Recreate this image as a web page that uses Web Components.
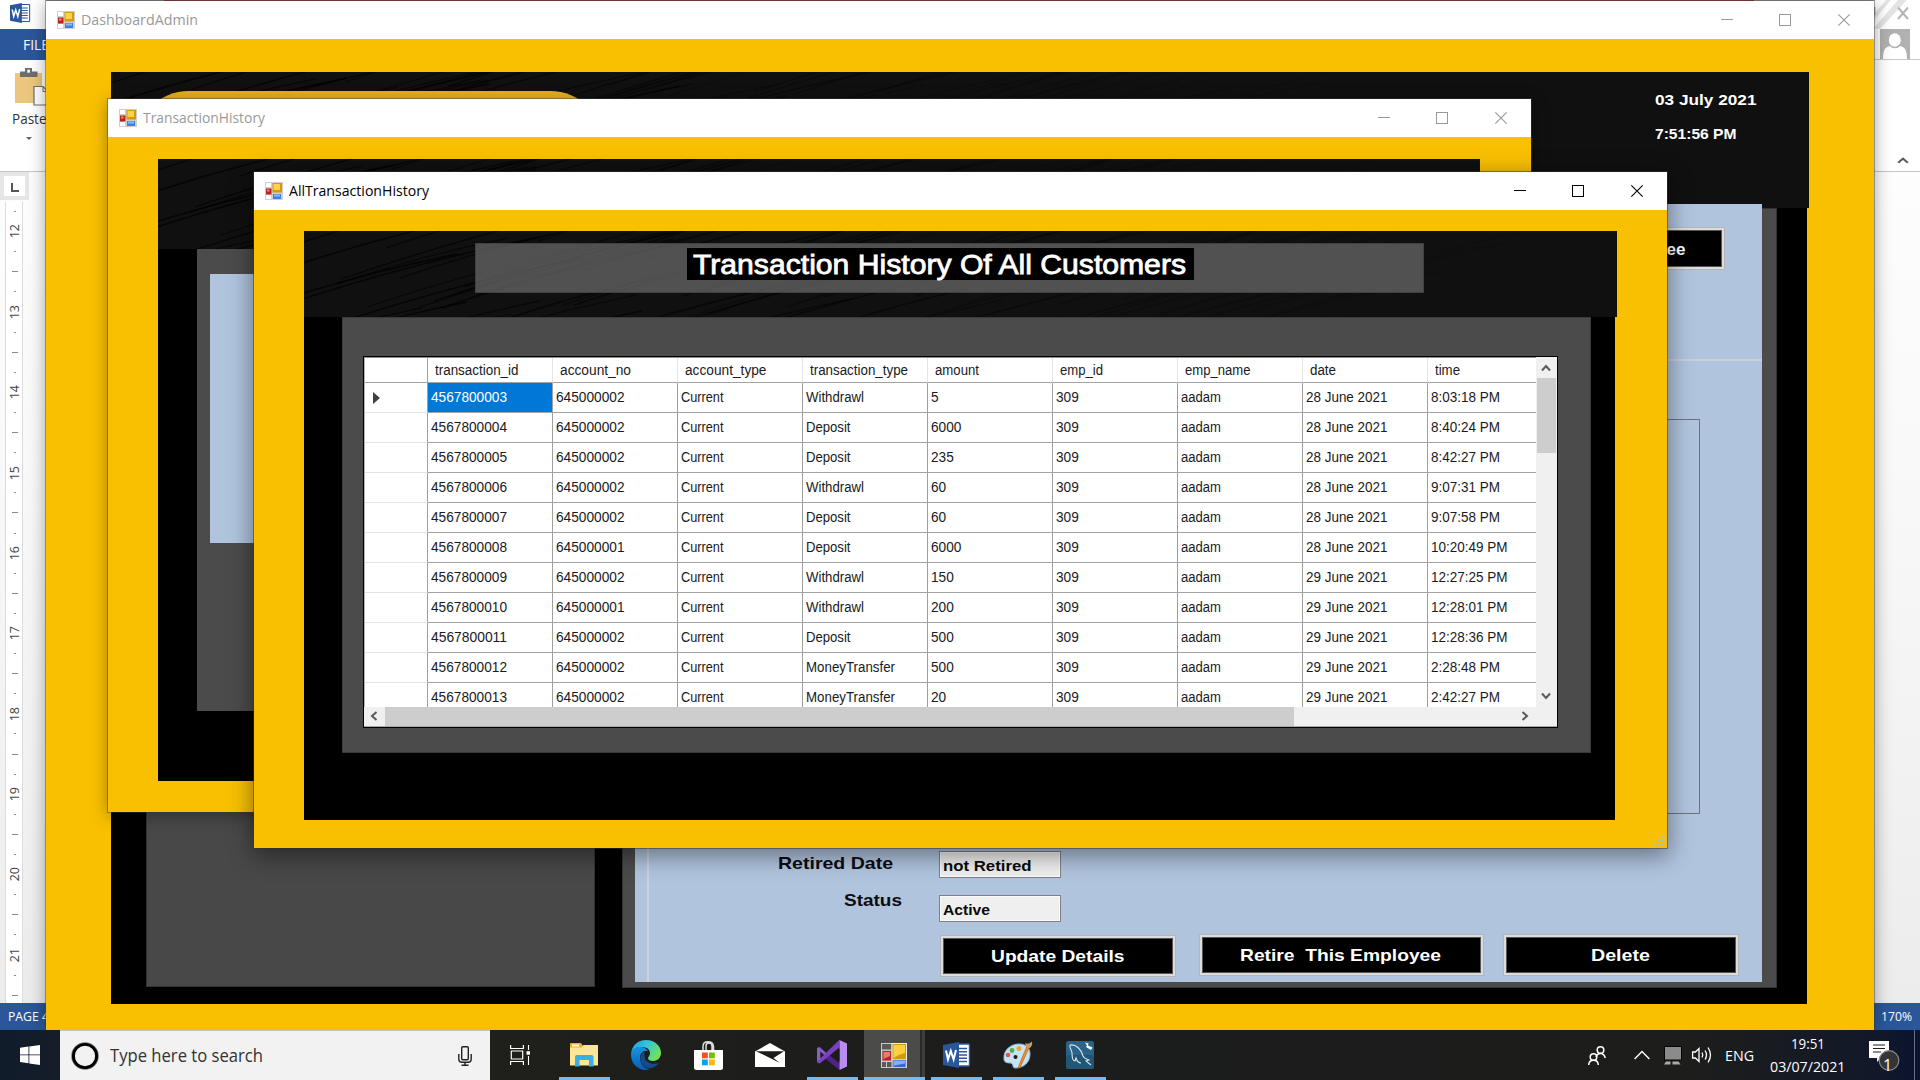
<!DOCTYPE html>
<html lang="en">
<head>
<meta charset="utf-8">
<title>AllTransactionHistory</title>
<style>
html,body{margin:0;height:100%;overflow:hidden}
body{font-family:"Open Sans","Noto Sans",sans-serif;width:1920px;height:1080px;position:relative;background:#fff}
</style>
</head>
<body>
<desk-top></desk-top>

<script>
const define = (name, css, html, after) => {
  customElements.define(name, class extends HTMLElement {
    connectedCallback() {
      if (this.shadowRoot) return;
      const root = this.attachShadow({ mode: 'open' });
      const t = document.createElement('template');
      t.innerHTML = `<style>*{box-sizing:border-box}${css}</style>` + (typeof html === 'function' ? html(this) : html);
      root.append(t.content.cloneNode(true));
      if (after) after(this, root);
    }
  });
};

/* Icons */
const formIcon = '<rect width="18" height="18" fill="#cfcfcf"/><path d="M1 1h5v4H1zM1 13h5v4H1z" fill="#fff"/><rect x="1" y="6.500" width="5.500" height="6" fill="#b8241c"/><rect x="2" y="7.500" width="2.500" height="2" fill="#e88"/><rect x="7.500" y="1" width="9.500" height="9.500" fill="#d79a08"/><rect x="8.500" y="2" width="6.500" height="6" fill="#fbd24a"/><rect x="8" y="12" width="8" height="5" fill="#3f7fe8"/><rect x="9" y="12.500" width="6" height="2" fill="#8db8ff"/>';
const taskForm = '<rect x=".5" y=".5" width="25" height="24" fill="#5a5a58" stroke="#c9c9c9"/><path d="M.5 7h11M.5 18.500h11M5.500 18.500V25M11 0v25" stroke="#c9c9c9"/><rect x="11" y=".5" width="14.500" height="16" fill="#d69a06" stroke="#eee"/><path d="M12.500 2H24v8q-6 1-11.500 5z" fill="#fbcf3f"/><rect x="1" y="7.500" width="9.500" height="10.500" fill="#b9242a" stroke="#ddd" stroke-width=".7"/><path d="M2.500 9H9v4l-6.500 3z" fill="#ea7a7a"/><rect x="12" y="16.500" width="13" height="8" fill="#3566d8" stroke="#ddd" stroke-width=".7"/><path d="M13 17.500h11v3l-11 2z" fill="#86aefb"/>';
const wordIcon = '<path d="M12 2h13.500q1 0 1 1v20q0 1-1 1H12z" fill="#fff" stroke="#2b579a" stroke-width="1.400"/><path d="M14 6.500h10M14 9.700h10M14 13h10M14 16.300h10M14 19.500h10" stroke="#2b579a" stroke-width="1.400"/><path d="M0 3l16-3v26L0 23z" fill="#2b579a"/><path d="M3 8.500l2 9 2.800-8.500 2.800 8.500 2.400-9.500" fill="none" stroke="#fff" stroke-width="2"/>';
const icons = {
  form: ['0 0 18 18', formIcon],
  taskform: ['0 0 26 25', taskForm],
  word: ['0 0 27 26', wordIcon],
  start: ['0 0 20 20', '<path d="M0 2.800L8.500 1.600v7.900H0zM9.300 1.500L20 0v9.500H9.300zM0 10.300h8.500v8L0 17.100zM9.300 10.300H20V20L9.300 18.500z" fill="#fff"/>'],
  cortana: ['0 0 28 28', '<circle cx="14" cy="14" r="12" fill="#fff" stroke="#777" stroke-width="3.600"/><circle cx="14" cy="14" r="11.600" fill="#f2f2f2" stroke="#000" stroke-width="2.900"/>'],
  mic: ['0 0 14 20', '<rect x="3.700" y=".7" width="6.600" height="13" rx="1" fill="none" stroke="#222" stroke-width="1.400"/><path d="M.8 8v5q0 3.200 3.200 3.200h6q3.200 0 3.200-3.200V8M7 16v3M3.500 19.200h7" fill="none" stroke="#222" stroke-width="1.400"/>'],
  taskview: ['0 0 20 20', '<path d="M.6 0v3.500h12.800V0M.6 20v-3.500h12.800V20M1.300 6h11.400v8H1.300z" fill="none" stroke="#fff" stroke-width="1.200"/><path d="M18.500 0v5M18.500 11v9" stroke="#fff" stroke-width="1.100"/><rect x="16.500" y="6.200" width="3.500" height="3.500" fill="#fff"/>'],
  explorer: ['0 0 28 24', '<path d="M0 1q0-1 1-1h10l2 3h14v19H0z" fill="#e8b21c"/><path d="M2 1.500h7v2H2z" fill="#fff"/><path d="M0 4.500h11.500l2-2.500H28v20.500H0z" fill="#ffe594"/><path d="M5 23.500V14q0-2 2-2h14.500q2 0 2 2v9.500h-4.500V17H9.500v6.500z" fill="#35b1e6"/>'],
  edge: ['0 0 30 30', '<defs><linearGradient id="a" x1="0" y1="0" x2="1" y2=".5"><stop offset="0" stop-color="#1b9de0"/><stop offset=".5" stop-color="#35c3d6"/><stop offset="1" stop-color="#6de35c"/></linearGradient><linearGradient id="b" x1="0" y1="0" x2="0" y2="1"><stop offset="0" stop-color="#1595e0"/><stop offset="1" stop-color="#0b5cb4"/></linearGradient></defs><path d="M0 14C1 5 7 0 15 0c9 0 15 6 15 13 0 5-4 8-8 8-3 0-5-1-5-3 0-1 2-2 2-5 0-4-4-6-8-6C5 7 1 10 0 14z" fill="url(#a)"/><path d="M0 15c0-6 6-9 11-8 3 1 5 2 6 4-5-1-8 3-8 7 0 6 5 11 10 11.500C8 32 0 24 0 15z" fill="url(#b)"/><path d="M13 12c-5 3-5 10 0 14 5 4 11 2 15-3-6 2-12 0-14-4-1-3 0-5-1-7z" fill="#104d8c"/>'],
  store: ['0 0 29 29', '<path d="M9 10V5.500q0-4.700 5-4.700t5.500 4.700V10M12 10V5q0-3 3-3t3 3v4" fill="none" stroke="#ddd" stroke-width="1.500"/><path d="M0 9h29v17.500q0 2.500-2.500 2.500h-24Q0 29 0 26.500z" fill="#fff"/><path d="M8 11.500h5.800v5.800H8z" fill="#f25022"/><path d="M15 11.500h5.800v5.800H15z" fill="#7fba00"/><path d="M8 18.500h5.800v5.800H8z" fill="#00a4ef"/><path d="M15 18.500h5.800v5.800H15z" fill="#ffb900"/>'],
  mail: ['0 0 30 24', '<path d="M0 8.500L15 0l15 8.500V24H0z" fill="#fff"/><path d="M1 8.200h28L18.500 15l6.500 5-14-7z" fill="#1c1c1b"/>'],
  vs: ['0 0 30 30', '<path d="M0 8l2.500-1 20 16.500V30L0 12z" fill="#52218a"/><path d="M0 8v14l2.500 1.500L22.500 7V0L9 13 2.500 7z" fill="#865fc5"/><path d="M3.300 11.500v7l4-3.500z" fill="#1c1c1b"/><path d="M22.500 0L30 3.500v23L22.500 30z" fill="#b98cf0"/><path d="M0 22l2.500 1.500L22.500 7V0z" fill="#7b3fc4"/><path d="M22.500 9L15 15l7.500 6z" fill="#1c1c1b"/>'],
  paint: ['0 0 30 28', '<path d="M1 18C0 9 8 3 16 3c7 0 11 4 11 10 0 9-7 14-15 14-3 0-1-4-4-5-3 0-7 0-7-4z" fill="#c5e3f4" stroke="#8bbbd8"/><circle cx="5" cy="14" r="2.300" fill="#e8504a"/><circle cx="9" cy="9.500" r="2.400" fill="#4db04a"/><circle cx="16" cy="7.500" r="2.500" fill="#f3a52b"/><circle cx="12.500" cy="16" r="2" fill="#1c1c1b"/><path d="M24 5L15 27l2-.5L26 7z" fill="#ef8f25" stroke="#b5641a" stroke-width=".7"/><path d="M22 2q3 2 7-1.500Q30 5 26 7.500L23.500 6z" fill="#c89c6a"/>'],
  mysql: ['0 0 28 28', '<rect width="28" height="28" rx="2.500" fill="#2a6488"/><rect y="14" width="28" height="14" rx="2.500" fill="#215675"/><path d="M4 4c6-1 11 4 13 11 1 3 4 3 6 4l-3 1 5 4M4 4c-1 3 2 5 2 8 0 5 1 8 3 8l1-3c1 3 3 5 5 5" fill="none" stroke="#d9e7ef" stroke-width="1.100"/><path d="M19 1.500l2 3-1 1.500 5 3 1.500-2.500L22 4.500l.5-2z" fill="#fff"/>'],
  people: ['0 0 18 19', '<g fill="none" stroke="#fff" stroke-width="1.500"><circle cx="12.500" cy="4" r="3.300"/><path d="M8 11q1-3.500 4.500-3.500T17.300 12"/><circle cx="5.500" cy="11" r="3.300"/><path d="M.7 19q.3-4.700 4.800-4.700T10.300 19"/></g>'],
  up: ['0 0 16 10', '<path d="M.6 9L8 1.500 15.400 9" fill="none" stroke="#fff" stroke-width="1.400"/>'],
  net: ['0 0 18 19', '<rect x=".5" y=".5" width="17" height="13.500" fill="#8b8b8b" stroke="#050505"/><path d="M0 18.500l2-3h4.500v3zM8.500 18.500v-3h6l2 3z" fill="#aaa"/>'],
  sound: ['0 0 21 18', '<g fill="none" stroke="#fff" stroke-width="1.300"><path d="M.6 6h2.800L7 2.500v13L3.400 12H.6z"/><path d="M10 6.500q1.600 2.500 0 5M13 4.500q3 4.500 0 9M16 1.500q5 7.500 0 15"/></g>'],
  note: ['0 0 31 32', '<path d="M0 2h20v17H12l-4 4v-4H0z" fill="#fff"/><path d="M4 6h12M4 9.500h12M4 13h8" stroke="#1c1c1b" stroke-width="1.200"/><circle cx="20" cy="21.500" r="9.800" fill="#343536" stroke="#8a8a8a" stroke-width="1.200"/>'],
  min: ['0 0 12 12', '<path d="M0 5.500h12" stroke="currentColor"/>'],
  max: ['0 0 12 12', '<rect x=".5" y=".5" width="11" height="11" fill="none" stroke="currentColor"/>'],
  close: ['0 0 12 12', '<path d="M.3.3l11.400 11.400M11.700.3L.3 11.700" fill="none" stroke="currentColor" stroke-width="1.100"/>'],
  chev: ['0 0 10 10', '<path d="M1 7.500l4-4.500 4 4.500" fill="none" stroke="#5a5a5a" stroke-width="2"/>'],
  paste: ['0 0 33 38', '<path d="M0 5h27v30H0z" fill="#ecc67e"/><path d="M5 3.500h5V0h7v3.500h5.500V9H5z" fill="#6d6d6d"/><rect x="12.300" y="1.700" width="2.600" height="3" fill="#fff"/><path d="M19 18.500h9l6 6v12.500H19z" fill="#fff" stroke="#6d6d6d" stroke-width="1.200"/><path d="M28 18.500v5h6" fill="none" stroke="#6d6d6d"/>'],
  avatar: ['0 0 30 30', '<rect width="30" height="30" fill="#b1b1b1"/><ellipse cx="14.800" cy="11" rx="6" ry="6.700" fill="#fff"/><path d="M3 30c0-9 2-12 7-13 2 3 8 3 10 0 5 1 7 4 7 13z" fill="#fff"/>'],
  stripes: ['0 0 46 29', '<path d="M0 14L12 0h5L0 20zM0 28L24 0h9L0 35z" fill="#e4e4e4"/><path d="M24 7.500l10 11.500M34 7.500L24 19" stroke="#b4b4b4" stroke-width="2"/><path d="M0 7v8" stroke="#aaa" stroke-width="3"/>']
};
define('ui-icon', ':host{display:block;flex:none}svg{display:block;overflow:visible}', el => {
  const [box, body] = icons[el.getAttribute('name')];
  const w = el.getAttribute('w'), h = el.getAttribute('h');
  return `<svg width="${w}" height="${h}" viewBox="${box}" preserveAspectRatio="none">${body}</svg>`;
});

/* Brushed dark texture behind form headers */
define('brushed-header', ':host{display:flex;background:#101010;overflow:hidden;position:relative}svg{position:absolute;left:0;top:0;z-index:0}slot{display:contents}::slotted(*){position:relative;z-index:1}',
  '<svg width="1700" height="140" viewBox="0 0 1700 140"></svg><slot></slot>',
  (el, root) => {
    let s = '', r = 7;
    const rnd = () => (r = (r * 16807) % 2147483647) / 2147483647;
    for (let i = 0; i < 90; i++) {
      const x = -80 + i * 12 + rnd() * 20, y = 10 + rnd() * 130, l = 140 + rnd() * 200;
      const o = Math.max(.1, .7 - x / 1500);
      s += `<path d="M${x.toFixed(0)} ${y.toFixed(0)}q${(l*.5).toFixed(0)} ${(-l*.17).toFixed(0)} ${l.toFixed(0)} ${(-l*.27).toFixed(0)}" stroke="#000" stroke-width="${(.7 + rnd() * 1.1).toFixed(1)}" opacity="${o.toFixed(2)}" fill="none"/>`;
    }
    root.querySelector('svg').innerHTML = s;
  });

/* Application window frame */
define('app-window', `
:host{position:absolute;isolation:isolate;display:flex;flex-direction:column;background:#f9c002;color:#999;box-shadow:0 0 0 1px rgba(60,60,60,.45),0 3px 16px rgba(0,0,0,.38)}
:host([active]){color:#000;box-shadow:0 0 0 1px rgba(50,50,50,.5),0 6px 22px 2px rgba(0,0,0,.42)}
.bar{height:38px;flex:none;background:#fff;display:flex;align-items:center;padding-left:11px;font-size:15px;line-height:20px}
.bar fit-text{margin:-2px 0 0 6px;flex:none}
.ctl{margin-left:auto;display:flex;padding-right:1px}
.ctl div{width:58.500px;display:flex;justify-content:center}
.body{flex:1;min-height:0;display:flex;flex-direction:column;align-items:flex-start;overflow:hidden}`,
  el => `<div class="bar"><ui-icon name="form" w="18" h="18"></ui-icon><fit-text w="${el.getAttribute('tw')}">${el.getAttribute('label')}</fit-text>
  <div class="ctl"><div><ui-icon name="min" w="12" h="12"></ui-icon></div><div><ui-icon name="max" w="12" h="12"></ui-icon></div><div><ui-icon name="close" w="12" h="12"></ui-icon></div></div></div>
  <div class="body"><slot></slot></div>`);

define('form-button', ':host{display:flex;align-items:center;justify-content:center;height:42.500px;background:#000;border:3px solid #dcdcdc;outline:1px solid #b5b5b8;outline-offset:-1px;color:#fff;font:bold 17px "Liberation Sans",sans-serif;flex:none;padding:2px 1px 0 0;box-shadow:inset 0 0 0 1px #555}', '<slot></slot>');
define('form-field', ':host{display:flex;align-items:flex-end;width:122px;height:26.500px;background:#efefef;border:1px solid #808084;box-shadow:inset 0 0 0 1px #fbfbfb;padding:0 0 2px 3px;font:bold 15.500px/19px "Liberation Sans",sans-serif;color:#0a0a0a;flex:none}', '<slot></slot>');

/* Dashboard form */
define('dashboard-form', `
:host{display:flex;flex-direction:column;margin:33px 0 0 65px;width:1698px}
brushed-header{height:136px;justify-content:space-between}
.pill{width:471px;height:110px;margin:19px 0 0 23px;background:#eab11f;border-radius:55px}
.clock{width:154px;color:#fff;font:bold 15.500px/34px "Liberation Sans",sans-serif;padding-top:11px;display:flex;flex-direction:column}
.main{width:1695.500px;height:796px;background:#000;display:flex;padding:0 30px 0 35px;align-items:flex-start}
.side{width:449px;height:779px;background:#484848;box-shadow:inset 0 0 0 1px #333}
.panel{margin-left:27px;width:1155px;height:780px;background:#4b4b4b;padding:0 15px 6px 13px;box-shadow:inset 0 0 0 1px #333}
.blue{margin-top:-4px;height:778px;background:#b0c4de;display:flex;flex-direction:column;position:relative;z-index:1}
.top{height:155px;display:flex;justify-content:flex-end;padding:23px 37px 0 0}
.top form-button{width:140px;justify-content:flex-end;padding:4px 36px 0 0}
.sec{margin-left:12px;flex:1;border-left:2px solid #cdd3dc;border-top:2px solid #c9d0da}
.group{width:1040px;height:395px;margin:58px 0 0 11px;border:1px solid #71717a}
.row{display:flex;align-items:flex-start;font:bold 17px/20px "Liberation Sans",sans-serif;color:#0c0c10}
.row fit-text{flex:none}`,
`<brushed-header><div class="pill"></div><div class="clock"><fit-text w="101.500">03 July 2021</fit-text><fit-text w="81.500" style="margin-top:-.5px">7:51:56 PM</fit-text></div></brushed-header>
<div class="main"><div class="side"></div><div class="panel"><div class="blue">
<div class="top"><form-button>ee</form-button></div>
<div class="sec"><div class="group"></div>
<div class="row" style="padding:37px 0 0 129px"><fit-text w="115" style="margin:3px 46px 0 0">Retired Date</fit-text><form-field><fit-text w="88.500">not Retired</fit-text></form-field></div>
<div class="row" style="padding:17.500px 0 0 195px"><fit-text w="58" style="margin:-4px 37px 0 0">Status</fit-text><form-field><fit-text w="47">Active</fit-text></form-field></div>
<div class="row" style="padding:12px 0 0 291px"><form-button style="width:236px;margin:1px 23px 0 0"><fit-text w="133.500">Update Details</fit-text></form-button><form-button style="width:285px;margin-right:19px"><fit-text w="201">Retire  This Employee</fit-text></form-button><form-button style="width:236px"><fit-text w="59">Delete</fit-text></form-button></div>
</div></div></div></div>`);

define('history-form', `
:host{display:block;margin:22px 0 0 50px;width:1322px}
brushed-header{height:90px}
.main{width:1320px;height:532px;background:#000;padding-left:38.500px}
.panel{width:1240px;height:462px;background:#4b4b4b;padding:25px 0 0 13px}
.blue{width:1200px;height:269px;background:#b0c4de}`,
'<brushed-header></brushed-header><div class="main"><div class="panel"><div class="blue"></div></div></div>');

/* Data grid */
const heads = [['transaction_id',83.5],['account_no',71],['account_type',81.5],['transaction_type',98],['amount',44],['emp_id',43],['emp_name',65.5],['date',26],['time',25]];
const rows = [
 ['4567800003','645000002','Withdrawl','5','28 June 2021','8:03:18 PM'],
 ['4567800004','645000002','Deposit','6000','28 June 2021','8:40:24 PM'],
 ['4567800005','645000002','Deposit','235','28 June 2021','8:42:27 PM'],
 ['4567800006','645000002','Withdrawl','60','28 June 2021','9:07:31 PM'],
 ['4567800007','645000002','Deposit','60','28 June 2021','9:07:58 PM'],
 ['4567800008','645000001','Deposit','6000','28 June 2021','10:20:49 PM'],
 ['4567800009','645000002','Withdrawl','150','29 June 2021','12:27:25 PM'],
 ['4567800010','645000001','Withdrawl','200','29 June 2021','12:28:01 PM'],
 ['4567800011','645000002','Deposit','500','29 June 2021','12:28:36 PM'],
 ['4567800012','645000002','MoneyTransfer','500','29 June 2021','2:28:48 PM'],
 ['4567800013','645000002','MoneyTransfer','20','29 June 2021','2:42:27 PM']];
const widths = { Withdrawl: 58, Deposit: 44.5, MoneyTransfer: 89 };
define('data-grid', `
:host{display:flex;flex-direction:column;width:1195px;height:372px;border:1px solid #000;background:#f0f0f0;font:15.500px/18px "Liberation Sans",sans-serif;color:#1a1a22}
.view{display:flex;height:350px}
.cells{width:1172px;flex:none;overflow:hidden;background:#fff;border-top:1px solid #8c8c8c;border-left:1px solid #b4b4b4}
.r{display:flex;height:30px;width:1190px}
.r>div{width:125px;flex:none;border-right:1px solid #9f9f9f;border-bottom:1px solid #a3a3a3;padding:5.500px 0 0 3px}
.r>div:first-child{width:62.500px;border-bottom-color:#e3e3e3;padding:9px 0 0 8px}
.h{height:25px}
.h>div{padding:3px 0 0 7.500px!important;border-right-color:#e5e5e5}
.h>div:first-child{border-right-color:#a0a0a0;border-bottom-color:#a3a3a3!important}
.sel{background:#0078d7;color:#fff}
.v{flex:1;display:flex;flex-direction:column;align-items:center;padding:6px 1px 6px 0}
.v .t{width:19px;height:75px;background:#cdcdcd;margin:5px 0 auto}
.b{flex:1;display:flex;align-items:center;border-bottom:1px solid #a8a8a8;padding:0 27px 0 5px}
.b .t{width:909px;height:19px;background:#cdcdcd;margin:0 auto 0 6px}
.left{transform:rotate(-90deg)}.right{transform:rotate(90deg)}.down{transform:rotate(180deg)}`,
() => {
  const cell = (t, w, c = '') => `<div class="${c}"><fit-text w="${w}">${t}</fit-text></div>`;
  const head = `<div class="r h"><div></div>${heads.map(h => cell(h[0], h[1])).join('')}</div>`;
  const body = rows.map((r, i) => `<div class="r"><div>${i ? '' : '<svg width="7" height="12" style="display:block"><path d="M0 0l7 6-7 6z" fill="#404040"/></svg>'}</div>` +
    cell(r[0], 76, i ? '' : 'sel') + cell(r[1], 68.5) + cell('Current', 42.5) + cell(r[2], widths[r[2]]) + cell(r[3], r[3].length * 7.6) + cell('309', 22.8) + cell('aadam', 40) + cell(r[4], 81.5) + cell(r[5], r[5].length > 10 ? 76.5 : 69) + '</div>').join('');
  return `<div class="view"><div class="cells">${head}${body}</div><div class="v"><ui-icon name="chev" w="10" h="10"></ui-icon><div class="t"></div><ui-icon class="down" name="chev" w="10" h="10"></ui-icon></div></div>
  <div class="b"><ui-icon class="left" name="chev" w="10" h="10"></ui-icon><div class="t"></div><ui-icon class="right" name="chev" w="10" h="10"></ui-icon></div>`;
});

define('all-history-form', `
:host{display:block;padding:21px 0 0 50px;width:1413px;height:638px;position:relative;box-sizing:border-box}
brushed-header{height:85.500px;width:1313px}
.banner{width:949px;height:49.500px;margin:12px 0 0 171px;background:rgba(110,110,110,.7);box-shadow:inset 0 0 0 1px rgba(50,50,50,.5);display:flex;justify-content:flex-start;padding:4.500px 0 0 212px}
.title{width:507px;height:32.500px;background:#000;color:#fff;font:27.500px/32px "Liberation Sans",sans-serif;-webkit-text-stroke:.8px #fff;padding:1px 0 0 6px}
.main{width:1311px;height:503px;background:#000;padding-left:37.500px}
.panel{width:1249.500px;height:436px;background:#4b4b4b;padding:39px 0 0 21.500px;box-shadow:inset 0 0 0 1px #3a3a3a}
.grip{position:absolute;right:2px;bottom:2px}`,
`<brushed-header><div class="banner"><div class="title"><fit-text w="493">Transaction History Of All Customers</fit-text></div></div></brushed-header>
<div class="main"><div class="panel"><data-grid></data-grid></div></div>
<svg class="grip" width="11" height="11" fill="#bdb9a6"><path d="M8 0h2.500v2.500H8zM4 4h2.500v2.500H4zM8 4h2.500v2.500H8zM0 8h2.500v2.500H0zM4 8h2.500v2.500H4zM8 8h2.500v2.500H8z"/></svg>`);

/* Word processor visible behind the forms */
define('word-backdrop', `
:host{display:flex;justify-content:space-between;width:1920px;height:1030px;background:linear-gradient(90deg,#a6a6a6 164px,#a4373a 164px 1754px,#b0b0b0 1754px)}
.col{width:46px;display:flex;flex-direction:column;background:#fff;overflow:hidden;white-space:nowrap}
.logo{height:29px;padding:3px 0 0 10px}
.file{height:31px;background:#2b579a;color:#fff;font-size:15px;line-height:30px;padding-left:22.500px}
.rib{height:112px;border-bottom:1px solid #c6c6c6;padding:8px 0 0 15px;flex:none}
.paste{margin-left:-3px;font-size:14.500px;line-height:20px;padding-top:3px;color:#333}
.arr{width:0;border:3px solid transparent;border-top-color:#666;margin:8px 0 0 11px}
.doc{flex:1;min-height:0;background:linear-gradient(#fdfdfd,#f9f9f9 35%,#ececec)}
.tab{width:29px;height:28px;background:#e6e6e6;padding:4px}
.tab div{width:21px;height:20px;background:#fff;padding:7px 0 0 7px}
.tab i{display:block;width:8px;height:9px;border-left:2px solid #555;border-bottom:2px solid #555}
.rul{width:18px;height:801.500px;margin:1.500px 0 0 5px;background:#fff;border:solid #dcdcdc;border-width:0 1px;overflow:hidden}
.u{height:20.100px;display:flex;align-items:center;justify-content:center;font-size:12.500px;line-height:16px;color:#444;padding-left:1px}
.u span{writing-mode:vertical-rl;transform:rotate(180deg)}
.u b{height:1px;width:2px;background:#888}.u b.l{width:6px}
.st{height:27px;background:#2b579a;color:#fff;font-size:12.500px;line-height:27px;padding-left:7.500px;flex:none}
.cap{height:29px;overflow:hidden}
.av{height:31px;padding:0 0 0 6px;border-bottom:1px solid #c9c9c9}
.rr{height:112px;border-bottom:1px solid #c6c6c6;display:flex;align-items:flex-end;justify-content:flex-end;padding:0 11px 6px}`,
() => `<div class="col"><div class="logo"><ui-icon name="word" w="20" h="20"></ui-icon></div><div class="file"><fit-text w="26">FILE</fit-text></div>
<div class="rib"><ui-icon name="paste" w="33" h="38"></ui-icon><div class="paste"><fit-text w="34.500">Paste</fit-text></div><div class="arr"></div></div>
<div class="doc"><div class="tab"><div><i></i></div></div><div class="rul">${Array.from({length:10},(_, i) => `<div class="u"><b></b></div><div class="u"><span>${12 + i}</span></div><div class="u"><b></b></div><div class="u"><b class="l"></b></div>`).join('')}</div></div>
<div class="st"><fit-text w="41">PAGE 4</fit-text></div></div>
<div class="col r"><div class="cap"><ui-icon name="stripes" w="46" h="29"></ui-icon></div><div class="av"><ui-icon name="avatar" w="30" h="30"></ui-icon></div><div class="rr"><ui-icon name="chev" w="12" h="9"></ui-icon></div><div class="doc"></div><div class="st" style="padding-left:6.500px"><fit-text w="31">170%</fit-text></div></div>`);

define('task-tile', `
:host{display:flex;flex-direction:column;align-items:center;justify-content:center;width:62px;height:50px;flex:none;position:relative;box-sizing:border-box;padding-right:1px}
:host([active]){background:linear-gradient(90deg,#4b4b49 56px,#2a2a2a 56px 57.500px,#3d3d3b 57.500px 61px,transparent 61px)}
i{position:absolute;bottom:0;left:5.500px;right:5.500px;height:3px;background:#76b9ed;display:none}
:host([open]) i{display:block}:host([active]) i{left:0;right:1px}`, '<slot></slot><i></i>');

define('task-bar', `
:host{display:flex;height:50px;width:1920px;color:#fff;background:linear-gradient(90deg,#101b2b 0,#151d28 60px,#1f1f1b 490px,#1b1c1c 60%,#1d1d1b 88%,#11182a 98%,#0b1430)}
:host>div{display:flex;align-items:center;justify-content:center;flex:none}
.s{width:60px}
.q{width:430px;background:#f2f2f2;border-top:1px solid #c3c3c3;color:#333;font-size:18px;line-height:24px;justify-content:flex-start!important;padding-left:11px}
.q fit-text{margin:-2px 0 0 11px}.q .m{margin-left:auto;margin-right:18.500px}
.clk{width:93px;flex-direction:column;font-size:15px;line-height:23px;padding-bottom:1px}
.n{width:60px;padding:0 4px 0 4px;position:relative}
.n b{position:absolute;left:29px;top:25px;font-weight:400;font-size:16px;line-height:20px}
.e{width:6px;border-left:1px solid #6a6f7c}`,
`<div class="s"><ui-icon name="start" w="20" h="20"></ui-icon></div>
<div class="q"><ui-icon name="cortana" w="28" h="28"></ui-icon><fit-text w="153">Type here to search</fit-text><ui-icon class="m" name="mic" w="14" h="20"></ui-icon></div>
<div style="width:63.500px;padding-right:4px"><ui-icon name="taskview" w="20" h="20"></ui-icon></div>
<task-tile open><ui-icon name="explorer" w="28" h="24"></ui-icon></task-tile>
<task-tile><ui-icon name="edge" w="30" h="30"></ui-icon></task-tile>
<task-tile><ui-icon name="store" w="29" h="29"></ui-icon></task-tile>
<task-tile><ui-icon name="mail" w="30" h="24"></ui-icon></task-tile>
<task-tile open><ui-icon name="vs" w="30" h="30"></ui-icon></task-tile>
<task-tile open active><ui-icon name="taskform" w="26" h="25"></ui-icon></task-tile>
<task-tile open><ui-icon name="word" w="27" h="26"></ui-icon></task-tile>
<task-tile open><ui-icon name="paint" w="30" h="28"></ui-icon></task-tile>
<task-tile open><ui-icon name="mysql" w="28" h="28"></ui-icon></task-tile>
<div style="margin-left:auto;width:40px"><ui-icon name="people" w="18" h="19"></ui-icon></div>
<div style="width:34px;margin-left:8px"><ui-icon name="up" w="16" h="10"></ui-icon></div>
<div style="width:27px"><ui-icon name="net" w="18" h="19"></ui-icon></div>
<div style="width:33px"><ui-icon name="sound" w="21" h="18"></ui-icon></div>
<div style="width:42px;font-size:15px;padding-right:1px"><fit-text w="29">ENG</fit-text></div>
<div class="clk"><fit-text w="34">19:51</fit-text><fit-text w="75.500">03/07/2021</fit-text></div>
<div class="n"><ui-icon name="note" w="31" h="32"></ui-icon><b>1</b></div>
<div class="e"></div>`);

define('desk-top', ':host{display:flex;flex-direction:column;width:1920px;height:1080px;position:relative;overflow:hidden}task-bar{position:relative;z-index:5}',
`<word-backdrop></word-backdrop>
<app-window label="DashboardAdmin" tw="117" style="left:46px;top:1px;width:1828px;height:1029px"><dashboard-form></dashboard-form></app-window>
<app-window label="TransactionHistory" tw="122" style="left:108px;top:99px;width:1423px;height:713px"><history-form></history-form></app-window>
<app-window active label="AllTransactionHistory" tw="140" style="left:254px;top:172px;width:1413px;height:676px"><all-history-form></all-history-form></app-window>
<task-bar></task-bar>`);

/* Text set to a fixed run width */
define('fit-text', ':host{display:inline-block;white-space:pre;vertical-align:top}span{display:inline-block;transform-origin:0 50%}', '<span><slot></slot></span>', (el, root) => {
  const w = parseFloat(el.getAttribute('w')), s = root.querySelector('span');
  const n = s.offsetWidth ? s.getBoundingClientRect().width : w;
  s.style.transform = `scaleX(${w / n})`;
  s.style.marginRight = (w - n) + 'px';
  el.style.width = w + 'px';
});
</script>
</body>
</html>
